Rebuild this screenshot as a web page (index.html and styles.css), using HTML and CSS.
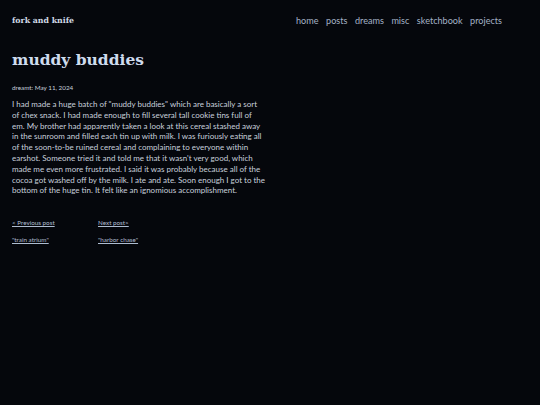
FILE: index.html
```html
<!DOCTYPE html>
<html>
<head>
<meta charset="utf-8">
<link rel="stylesheet" href="styles.css">
</head>
<body>
<header class="site-header">
  <a class="site-title" href="#">fork and knife</a>
  <nav class="site-nav">
    <a href="#">home</a>
    <a href="#">posts</a>
    <a href="#">dreams</a>
    <a href="#">misc</a>
    <a href="#">sketchbook</a>
    <a href="#">projects</a>
  </nav>
</header>
<main class="post">
  <h1 class="post-title">muddy buddies</h1>
  <p class="post-meta">dreamt: May 11, 2024</p>
  <p class="post-body">I had made a huge batch of "muddy buddies" which are basically a sort<br>of chex snack. I had made enough to fill several tall cookie tins full of<br>em. My brother had apparently taken a look at this cereal stashed away<br>in the sunroom and filled each tin up with milk. I was furiously eating all<br>of the soon-to-be ruined cereal and complaining to everyone within<br>earshot. Someone tried it and told me that it wasn't very good, which<br>made me even more frustrated. I said it was probably because all of the<br>cocoa got washed off by the milk. I ate and ate. Soon enough I got to the<br>bottom of the huge tin. It felt like an ignomious accomplishment.</p>
  <div class="post-nav">
    <div class="post-nav-item">
      <a href="#">&lt; Previous post</a>
      <a href="#">"train atrium"</a>
    </div>
    <div class="post-nav-item">
      <a href="#">Next post&gt;</a>
      <a href="#">"harbor chase"</a>
    </div>
  </div>
</main>
</body>
</html>
```
FILE: styles.css
```css
html, body {
  margin: 0;
  padding: 0;
  background: #05070c;
  height: 100%;
}
body {
  font-family: "Lato", "Open Sans", sans-serif;
  color: #c8d0dc;
}
a { color: inherit; }
.site-header {
  display: flex;
  justify-content: space-between;
  align-items: center;
  padding: 13px 38px 0 12px;
  height: 14px;
}
.site-title {
  font-family: "DejaVu Serif", serif;
  font-weight: bold;
  font-size: 7.8px;
  color: #d0dae6;
  text-decoration: none;
}
.site-nav {
  display: flex;
  gap: 7.5px;
  font-size: 9.1px;
}
.site-nav a {
  color: #a4b2c6;
  text-decoration: none;
}
.post {
  padding: 0 12px;
  width: 270px;
}
.post-title {
  font-family: "DejaVu Serif", serif;
  font-weight: bold;
  font-size: 15.5px;
  color: #cfdcee;
  margin: 23px 0 0 0;
  line-height: 20px;
}
.post-meta {
  font-size: 6.3px;
  margin: 13px 0 0 0;
  line-height: 10px;
}
.post-body {
  font-size: 8px;
  line-height: 10.8px;
  margin: 6px 0 0 0;
  white-space: nowrap;
}
.post-nav {
  display: flex;
  margin-top: 22px;
}
.post-nav-item {
  display: flex;
  flex-direction: column;
  gap: 7px;
  width: 86px;
  font-size: 6.3px;
  line-height: 10px;
}
.post-nav-item a {
  color: #aebcd0;
}
```
